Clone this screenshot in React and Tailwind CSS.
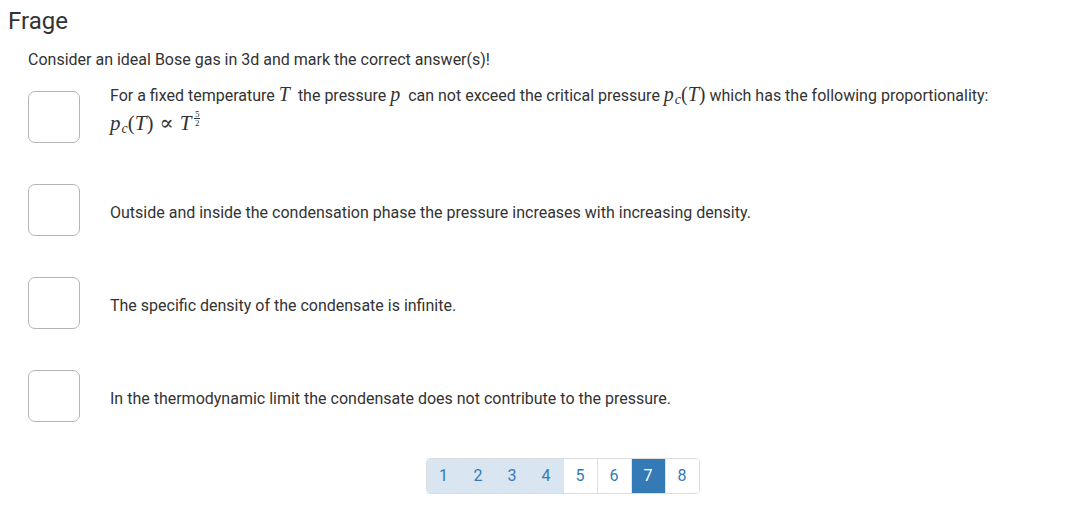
import React from "react";

const serif = { fontFamily: '"Liberation Serif", "DejaVu Serif", serif' };
const M = ({ children }) => (
  <span className="italic text-[20px] leading-none" style={serif}>{children}</span>
);
const R = ({ children }) => (
  <span className="text-[20px] leading-none" style={serif}>{children}</span>
);
const Sub = ({ children }) => (
  <span className="italic text-[14px] leading-none relative top-[3px] ml-[1px]" style={serif}>{children}</span>
);

function Box() {
  return <div className="w-[52px] h-[52px] shrink-0 rounded-[7px] border border-[#b5b5b5] bg-white" />;
}

export default function App() {
  const pages = [1, 2, 3, 4, 5, 6, 7, 8];
  return (
    <div className="w-[1088px] h-[517px] bg-white text-[#333] overflow-hidden" style={{ fontFamily: 'Roboto, "Liberation Sans", sans-serif' }}>
      <h1 className="pl-[8px] pt-[7px] text-[24px] leading-[28px] text-[#333]">Frage</h1>
      <div className="pl-[28px] pt-[15px]">
        <p className="text-[16px] leading-[20px]">Consider an ideal Bose gas in 3d and mark the correct answer(s)!</p>
        <div className="mt-[21px] flex flex-col gap-[41px]">
          <div className="flex items-start gap-[30px]">
            <Box />
            <div className="text-[16px] leading-[23px] -mt-[7px]">
              <div>
                For a fixed temperature <M>T</M>&nbsp; the pressure <M>p</M>&nbsp; can not exceed the critical pressure{" "}
                <M>p</M><Sub>c</Sub>
                <R>(</R><M>T</M><R>)</R> which has the following proportionality:
              </div>
              <div className="pt-[3px] leading-[26px]">
                <span className="italic text-[21px]" style={serif}>p</span>
                <span className="italic text-[14px] relative top-[3px] ml-[1px]" style={serif}>c</span>
                <span className="text-[21px]" style={serif}>(</span>
                <span className="italic text-[21px]" style={serif}>T</span>
                <span className="text-[21px]" style={serif}>)</span>
                <span className="text-[21px] mx-[6px]" style={serif}>∝</span>
                <span className="italic text-[21px]" style={serif}>T</span>
                <span className="relative -top-[7px] inline-flex flex-col items-center ml-[3px] align-middle text-[9px] leading-[8px]" style={serif}>
                  <span>5</span>
                  <span className="w-[6px] border-t border-[#333]" />
                  <span>2</span>
                </span>
              </div>
            </div>
          </div>
          <div className="flex items-center gap-[30px]">
            <Box />
            <div className="text-[16px] leading-[20px] pt-[5px]">Outside and inside the condensation phase the pressure increases with increasing density.</div>
          </div>
          <div className="flex items-center gap-[30px]">
            <Box />
            <div className="text-[16px] leading-[20px] pt-[5px]">The specific density of the condensate is infinite.</div>
          </div>
          <div className="flex items-center gap-[30px]">
            <Box />
            <div className="text-[16px] leading-[20px] pt-[5px]">In the thermodynamic limit the condensate does not contribute to the pressure.</div>
          </div>
        </div>
      </div>
      <div className="flex justify-center mt-[36px] pl-[37px]">
        <div className="flex border border-[#ddd] rounded-[4px] overflow-hidden">
          {pages.map((n, i) => {
            const done = n <= 4;
            const active = n === 7;
            return (
              <div
                key={n}
                className={
                  "w-[34px] h-[34px] flex items-center justify-center text-[16px] " +
                  (i > 0 ? "border-l border-[#dde3ea] " : "") +
                  (active ? "bg-[#337ab7] text-white" : done ? "bg-[#d9e5f1] text-[#337ab7]" : "bg-white text-[#337ab7]")
                }
              >
                {n}
              </div>
            );
          })}
        </div>
      </div>
    </div>
  );
}
